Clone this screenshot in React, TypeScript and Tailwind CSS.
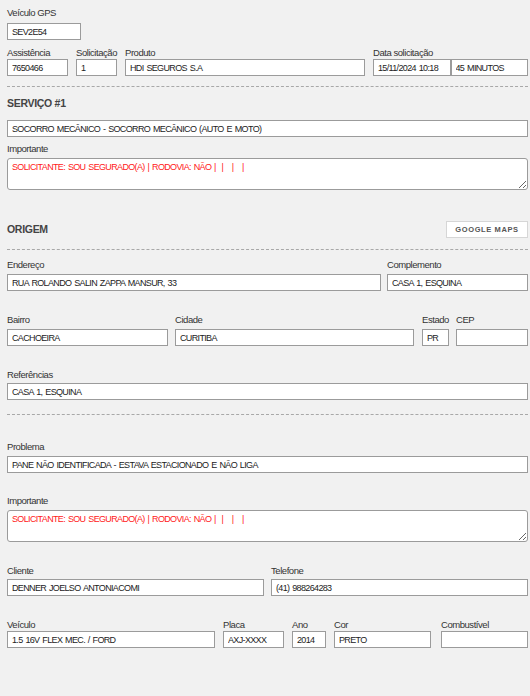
import React from "react";

const font = { fontFamily: '"Liberation Sans", Arial, sans-serif' };

function Label({ text, className = "" }: { text: string; className?: string }) {
  return (
    <div className={`h-[12px] text-[9.5px] leading-[12px] tracking-[-0.45px] text-[#333] whitespace-nowrap ${className}`}>
      {text}
    </div>
  );
}

function Box({ value, className = "" }: { value?: string; className?: string }) {
  return (
    <input
      readOnly
      value={value ?? ""}
      className={`block h-[17px] w-full border border-[#9b9b9b] bg-white px-[4px] text-[9px] leading-[15px] tracking-[-0.65px] [word-spacing:1px] text-[#222] outline-none ${className}`}
      style={font}
    />
  );
}

function Field({
  label,
  value,
  className = "",
  gap = "mt-[2px]",
}: {
  label: string;
  value?: string;
  className?: string;
  gap?: string;
}) {
  return (
    <div className={className}>
      <Label text={label} />
      <Box value={value} className={gap} />
    </div>
  );
}

function Note({ value }: { value: string }) {
  return (
    <textarea
      readOnly
      value={value}
      className="block h-[32px] w-full rounded-[3px] border border-[#9b9b9b] bg-white px-[4px] pt-[2px] text-[9px] leading-[12px] tracking-[-0.65px] [word-spacing:1px] text-[#ff2020] outline-none"
      style={font}
    />
  );
}

function Dashed({ className = "" }: { className?: string }) {
  return <div className={`border-t border-dashed border-[#a8a8a8] ${className}`} />;
}

export default function App() {
  const importante = "SOLICITANTE: SOU SEGURADO(A) | RODOVIA: NÃO |  |   |   |";

  return (
    <div className="min-h-[696px] bg-[#f1f1f1] pl-[7px] pr-[2px] pt-[7px]" style={font}>
      <Field label="Veículo GPS" value="SEV2E54" className="w-[74px]" gap="mt-[4px]" />

      <div className="mt-[7px] flex items-end">
        <Field label="Assistência" value="7650466" className="w-[61px]" gap="mt-0" />
        <Field label="Solicitação" value="1" className="ml-[8px] w-[41px]" gap="mt-0" />
        <Field label="Produto" value="HDI SEGUROS S.A" className="ml-[8px] flex-1" gap="mt-0" />
        <div className="ml-[8px] w-[155px]">
          <Label text="Data solicitação" />
          <div className="flex">
            <Box value="15/11/2024 10:18" className="w-[78px]" />
            <Box value="45 MINUTOS" className="w-[77px]" />
          </div>
        </div>
      </div>

      <Dashed className="mt-[10px]" />

      <div className="mt-[9px] h-[14px] text-[10.5px] font-bold leading-[14px] tracking-[-0.3px] text-[#444]">
        SERVIÇO #1
      </div>
      <Box value="SOCORRO MECÂNICO - SOCORRO MECÂNICO (AUTO E MOTO)" className="mt-[10px]" />
      <Label text="Importante" className="mt-[6px]" />
      <div className="mt-[3px]">
        <Note value={importante} />
      </div>

      <div className="mt-[31px] flex h-[17px] items-center justify-between">
        <div className="text-[10.5px] font-bold tracking-[-0.3px] text-[#444]">ORIGEM</div>
        <button className="h-[17px] w-[82px] border border-[#d6d6d6] bg-white text-[7.5px] font-bold tracking-[0.6px] text-[#555]">
          GOOGLE MAPS
        </button>
      </div>

      <Dashed className="mt-[11px]" />

      <div className="mt-[9px] flex gap-[6px]">
        <Field label="Endereço" value="RUA ROLANDO SALIN ZAPPA MANSUR, 33" className="flex-1" gap="mt-[3px]" />
        <Field label="Complemento" value="CASA 1, ESQUINA" className="w-[141px]" gap="mt-[3px]" />
      </div>

      <div className="mt-[23px] flex gap-[7px]">
        <Field label="Bairro" value="CACHOEIRA" className="w-[161px]" gap="mt-[3px]" />
        <Field label="Cidade" value="CURITIBA" className="flex-1" gap="mt-[3px]" />
        <Field label="Estado" value="PR" className="ml-[1px] w-[27px]" gap="mt-[3px]" />
        <Field label="CEP" value="" className="w-[72px]" gap="mt-[3px]" />
      </div>

      <div className="mt-[23px]">
        <Field label="Referências" value="CASA 1, ESQUINA" gap="mt-[2px]" />
      </div>

      <Dashed className="mt-[14px]" />

      <div className="mt-[26px]">
        <Field label="Problema" value="PANE NÃO IDENTIFICADA - ESTAVA ESTACIONADO E NÃO LIGA" gap="mt-[3px]" />
      </div>

      <Label text="Importante" className="mt-[22px]" />
      <div className="mt-[3px]">
        <Note value={importante} />
      </div>

      <div className="mt-[23px] grid grid-cols-2 gap-[7px]">
        <Field label="Cliente" value="DENNER JOELSO ANTONIACOMI" gap="mt-[2px]" />
        <Field label="Telefone" value="(41) 988264283" gap="mt-[2px]" />
      </div>

      <div className="mt-[23px] flex">
        <Field label="Veículo" value="1.5 16V FLEX MEC. / FORD" className="flex-1" gap="mt-0" />
        <Field label="Placa" value="AXJ-XXXX" className="ml-[8px] w-[61px]" gap="mt-0" />
        <Field label="Ano" value="2014" className="ml-[8px] w-[34px]" gap="mt-0" />
        <Field label="Cor" value="PRETO" className="ml-[8px] w-[97px]" gap="mt-0" />
        <Field label="Combustível" value="" className="ml-[10px] w-[87px]" gap="mt-0" />
      </div>
    </div>
  );
}
